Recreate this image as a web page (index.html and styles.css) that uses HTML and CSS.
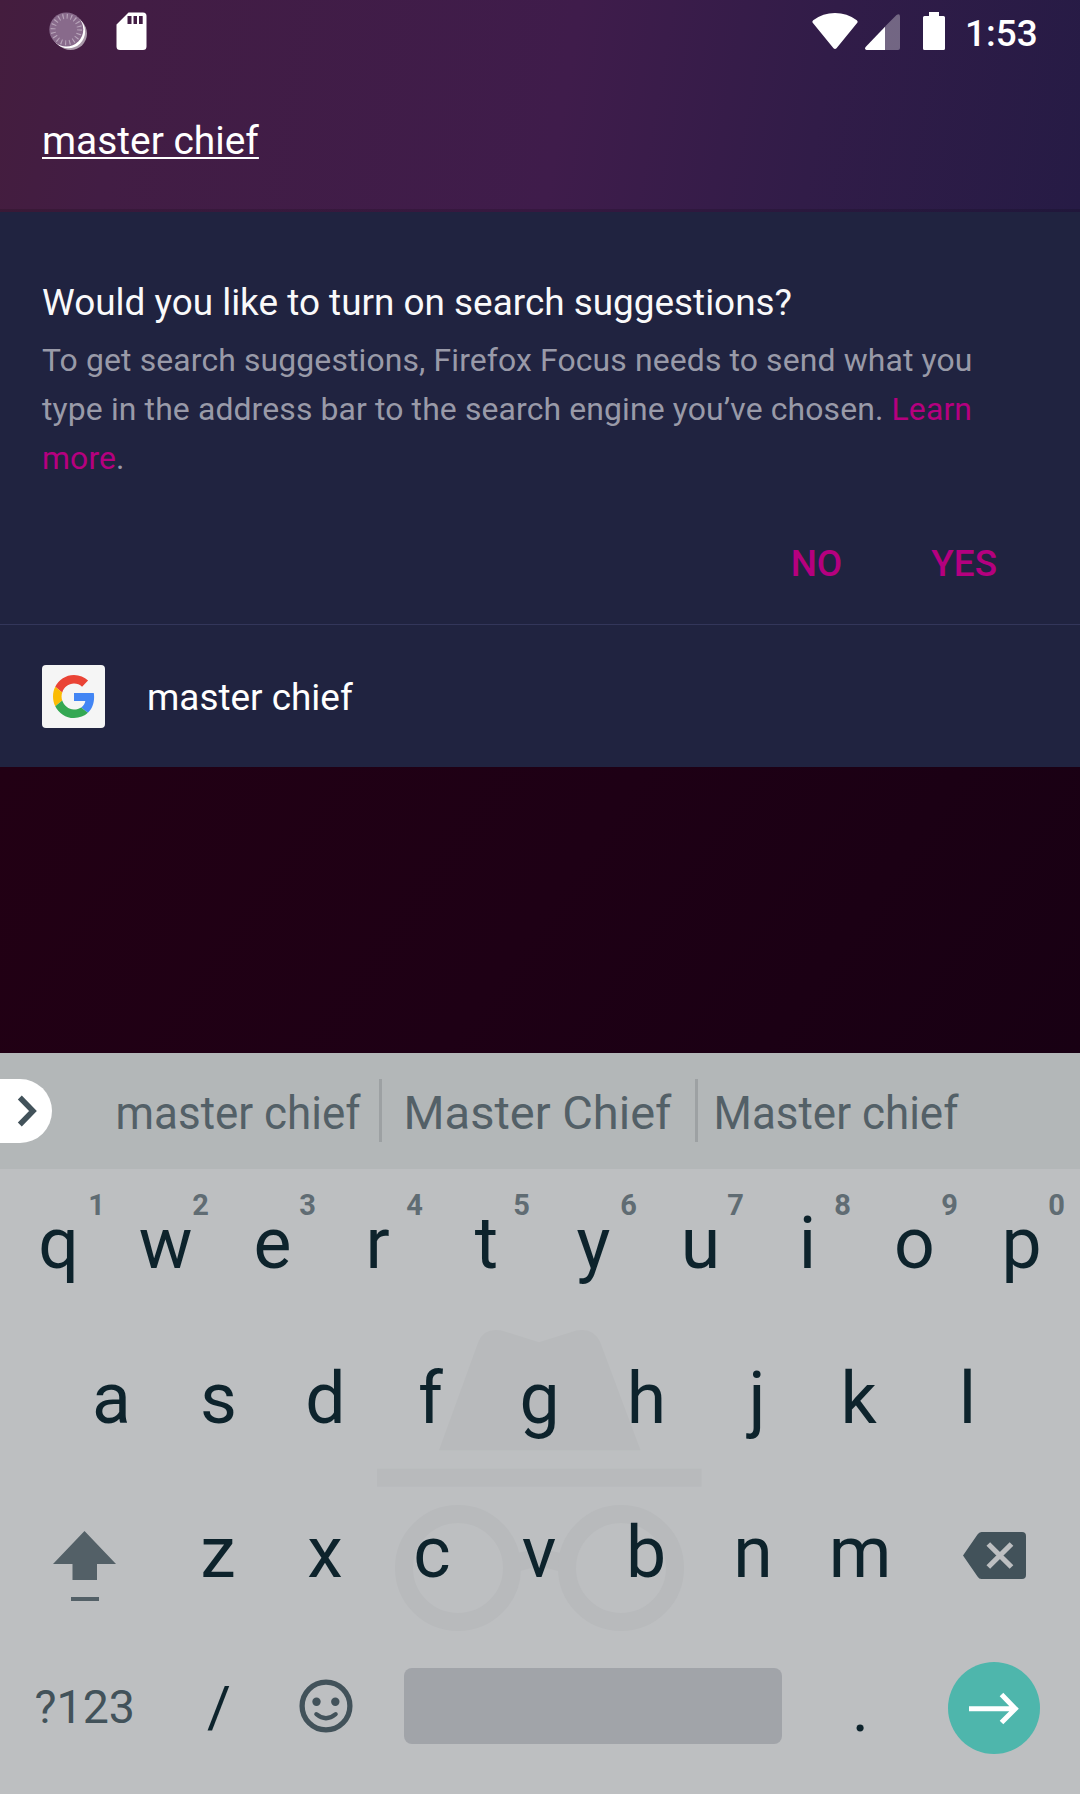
FILE: index.html
```html
<!DOCTYPE html>
<html lang="en">
<head>
<meta charset="utf-8">
<title>Search</title>
<link rel="stylesheet" href="styles.css">
</head>
<body>
<div class="screen">
  <header class="header">
    <div class="status-bar">
      <svg class="icon-sync" width="38" height="40" viewBox="0 0 38 40">
        <circle cx="21.5" cy="21.5" r="16.5" fill="#fff" fill-opacity=".55"/>
        <circle cx="19.3" cy="19.5" r="16.8" fill="#fff"/>
        <circle cx="17.3" cy="17.5" r="17" fill="#886a8b"/>
        <circle cx="17.3" cy="17.5" r="13.2" fill="none" stroke="#b8a5ba" stroke-width="5" stroke-dasharray="1.1 3.0469"/>
      </svg>
      <svg class="icon-sd" width="31" height="38" viewBox="0 0 31 38">
        <path fill="#fff" fill-rule="evenodd" d="M12.5.5H27Q30.500.5 30.500 4V34.500Q30.500 38 27 38H4Q.5 38 .5 34.500V12.500ZM11.500 4V12H15.500V4ZM17.500 4V12H21V4ZM23 4V12H26.700V4Z"/>
      </svg>
      <span class="spacer"></span>
      <svg class="icon-wifi" width="46" height="37" viewBox="0 0 46 37">
        <path fill="#fff" d="M.5 9.500Q0 8 1.200 7.200Q11 0 23 0T44.800 7.200Q46 8 45.500 9.500L24.500 35.300Q23 36.800 21.500 35.300Z"/>
      </svg>
      <svg class="icon-signal" width="35" height="36" viewBox="0 0 35 36">
        <path fill="#fff" fill-opacity=".33" d="M20 12.500 31.500 1Q35-.8 35 2.500V34Q35 36 33 36H20Z"/>
        <path fill="#fff" d="M20 12.800V36H1.500Q-.8 35.500.6 33Z"/>
      </svg>
      <svg class="icon-battery" width="22" height="38" viewBox="0 0 22 38">
        <path fill="#fff" d="M6 0H16V4H20.500Q22 4 22 5.500V36.500Q22 38 20.500 38H1.500Q0 38 0 36.500V5.500Q0 4 1.500 4H6Z"/>
      </svg>
      <span class="clock">1:53</span>
    </div>
    <div class="url-bar"><span class="url-text">master chief</span></div>
  </header>

  <main class="panel">
    <section class="prompt">
      <h1 class="prompt-title">Would you like to turn on search suggestions?</h1>
      <p class="prompt-body">To get search suggestions, Firefox Focus needs to send what you type in the address bar to the search engine you’ve chosen. <a class="link">Learn more</a>.</p>
      <div class="prompt-actions">
        <span class="action">NO</span>
        <span class="action">YES</span>
      </div>
    </section>
    <section class="result">
      <div class="engine">
        <svg width="42" height="43" viewBox="0 0 48 48" preserveAspectRatio="none">
          <path fill="#EA4335" d="M24 9.500c3.540 0 6.710 1.220 9.210 3.600l6.850-6.850C35.900 2.380 30.470 0 24 0 14.620 0 6.510 5.380 2.560 13.220l7.980 6.190C12.430 13.720 17.740 9.500 24 9.500z"/>
          <path fill="#4285F4" d="M46.980 24.550c0-1.570-.15-3.090-.38-4.550H24v9.020h12.940c-.58 2.960-2.260 5.480-4.780 7.180l7.730 6c4.510-4.180 7.090-10.360 7.090-17.650z"/>
          <path fill="#FBBC05" d="M10.530 28.590c-.48-1.450-.76-2.990-.76-4.590s.27-3.140.76-4.590l-7.980-6.190C.92 16.460 0 20.120 0 24c0 3.880.92 7.540 2.560 10.780l7.970-6.190z"/>
          <path fill="#34A853" d="M24 48c6.480 0 11.930-2.130 15.890-5.810l-7.730-6c-2.150 1.450-4.920 2.300-8.160 2.300-6.260 0-11.570-4.220-13.470-9.910l-7.980 6.190C6.510 42.620 14.620 48 24 48z"/>
        </svg>
      </div>
      <span class="result-text">master chief</span>
    </section>
  </main>

  <div class="backdrop"></div>

  <section class="keyboard">
    <div class="strip">
      <div class="expand">
        <svg width="54" height="64" viewBox="0 0 54 64">
          <path d="M19.800 18.500 33 32 19.800 45.500" fill="none" stroke="#42525a" stroke-width="5.500"/>
        </svg>
      </div>
      <div class="candidate first"><span class="narrow">master chief</span></div>
      <div class="divider"></div>
      <div class="candidate second"><span>Master Chief</span></div>
      <div class="divider"></div>
      <div class="candidate third"><span class="narrow">Master chief</span></div>
    </div>
    <div class="keys">
      <svg class="incognito" width="325" height="304" viewBox="0 0 325 304">
        <g fill="#b8babc">
          <path d="M62 122.300 101.500 13.500Q107.500-.8 124.500 2.500L162 14.300 199.500 2.500Q216-.8 223 13.700L263.500 122.300Z"/>
          <path d="M0 140.700H324.500V158.700H0Z"/>
          <path d="M140 225Q162 219 184 225L181 243Q162 236.500 143 243Z"/>
        </g>
        <g fill="none" stroke="#b8babc" stroke-width="18">
          <circle cx="81" cy="240" r="54"/>
          <circle cx="244" cy="240" r="54"/>
        </g>
      </svg>
      <div class="row top">
        <div class="key">q<span class="hint one">1</span></div>
        <div class="key">w<span class="hint">2</span></div>
        <div class="key">e<span class="hint">3</span></div>
        <div class="key lean-left">r<span class="hint">4</span></div>
        <div class="key">t<span class="hint">5</span></div>
        <div class="key">y<span class="hint">6</span></div>
        <div class="key">u<span class="hint">7</span></div>
        <div class="key">i<span class="hint">8</span></div>
        <div class="key">o<span class="hint">9</span></div>
        <div class="key">p<span class="hint">0</span></div>
      </div>
      <div class="row home">
        <div class="key">a</div><div class="key">s</div><div class="key">d</div>
        <div class="key lean-left">f</div><div class="key">g</div><div class="key">h</div>
        <div class="key lean-right">j</div><div class="key lean-left">k</div><div class="key">l</div>
      </div>
      <div class="row">
        <div class="key wide">
          <svg class="icon-shift" width="64" height="72" viewBox="0 0 64 72">
            <path fill="#536067" d="M31.500 1 63 34H44V50H19.500V34H0ZM18 67H46V71H18Z"/>
          </svg>
        </div>
        <div class="key">z</div><div class="key">x</div><div class="key">c</div>
        <div class="key">v</div><div class="key">b</div><div class="key">n</div>
        <div class="key">m</div>
        <div class="key wide">
          <svg class="icon-delete" width="63" height="47" viewBox="0 0 63 47">
            <path fill="#42525a" d="M18.500 0H59Q63 0 63 4V43Q63 47 59 47H18.500Q16 47 14.500 44.500L0 23.500 14.500 2.500Q16 0 18.500 0Z"/>
            <path d="M25.300 12 48.500 35M48.500 12 25.300 35" stroke="#bdbfc1" stroke-width="5.200"/>
          </svg>
        </div>
      </div>
      <div class="row">
        <div class="key wide symbols">?123</div>
        <div class="key slash">/</div>
        <div class="key">
          <svg class="icon-emoji" width="54" height="54" viewBox="0 0 54 54">
            <g fill="none" stroke="#42525a">
              <circle cx="27" cy="27" r="23.900" stroke-width="5.300"/>
              <path d="M17.300 35.200Q27 43.300 36.700 35.200" stroke-width="4.200" stroke-linecap="round"/>
            </g>
            <circle cx="17.500" cy="22.700" r="4.200" fill="#42525a"/>
            <circle cx="36.300" cy="22.700" r="4.200" fill="#42525a"/>
          </svg>
        </div>
        <div class="key space"><div class="space-bar"></div></div>
        <div class="key period">.</div>
        <div class="key wide">
          <div class="enter">
            <svg width="92" height="92" viewBox="0 0 92 92">
              <path d="M21 46.700H67M53.500 32.500 67.300 46.700 53.500 60.500" fill="none" stroke="#fff" stroke-width="5"/>
            </svg>
          </div>
        </div>
      </div>
    </div>
  </section>
</div>
</body>
</html>
```
FILE: styles.css
```css
* { box-sizing: border-box; }

body {
  margin: 0;
  font-family: Roboto, sans-serif;
  font-size: 36.9px;
  line-height: 1.172;
}

.screen {
  width: 1080px;
  height: 1794px;
  display: flex;
  flex-direction: column;
  overflow: hidden;
  background: #1c0013;
}

.header {
  height: 212px;
  background:
    linear-gradient(rgba(0, 0, 0, .15), rgba(0, 0, 0, .15)) 0 209px / 100% 3px no-repeat,
    linear-gradient(100deg, #441d3e 0%, #421d44 12%, #3f1c4b 52%, #311c48 75%, #261b45 100%);
}

.status-bar {
  height: 63px;
  display: flex;
  align-items: flex-start;
  padding: 12px 42px 0 49px;
  color: #fff;
}

.icon-sd { margin-left: 29px; }
.spacer { flex: 1; }
.icon-wifi { margin: 1px 7px 0 0; }
.icon-signal { margin: 2px 23px 0 0; }
.icon-battery { margin-right: 20px; }

.clock {
  font-weight: 500;
  width: 73px;
  white-space: nowrap;
}

.url-bar {
  height: 149px;
  display: flex;
  align-items: center;
  padding: 6px 42px 0;
  color: #fff;
  font-size: 38.9px;
}

.url-text {
  text-decoration: underline;
  text-decoration-thickness: 2px;
  text-underline-offset: 3px;
  text-decoration-skip-ink: none;
}

.panel {
  height: 555px;
  background: #202340;
}

.prompt {
  height: 413px;
  padding: 69px 42px 0;
  border-bottom: 1px solid #33365a;
}

.prompt-title {
  margin: 0;
  font-size: 36.9px;
  font-weight: 400;
  color: #f9f9fa;
}

.prompt-body {
  margin: 12px 0 0;
  padding-right: 42px;
  font-size: 31.9px;
  line-height: 49px;
  letter-spacing: .13px;
  color: #999aa8;
}

.link { color: #b5007f; }

.prompt-actions {
  display: flex;
  justify-content: flex-end;
  gap: 89px;
  margin-top: 59px;
  padding-right: 41px;
  color: #b5007f;
  font-weight: 500;
}

.result {
  height: 142px;
  display: flex;
  align-items: center;
  gap: 42px;
  padding: 0 42px;
  color: #fff;
}

.result-text { padding-top: 3px; }

.engine {
  width: 63px;
  height: 63px;
  display: flex;
  align-items: center;
  justify-content: center;
  border-radius: 4px;
  background: #f5f5f5;
}

.backdrop {
  height: 286px;
  background: linear-gradient(125deg, #220014 0%, #1e0015 50%, #180013 100%);
}

.keyboard {
  height: 741px;
  background: #bdbfc1;
}

.strip {
  height: 116px;
  display: flex;
  align-items: center;
  background: #b3b7b8;
  color: #536067;
  font-size: 47px;
}

.expand {
  width: 52px;
  height: 64px;
  border-radius: 0 32px 32px 0;
  background: #fff;
}

.candidate {
  display: flex;
  justify-content: center;
  padding-top: 3px;
  white-space: nowrap;
}

.candidate.first { width: 327px; padding-left: 45px; }
.candidate.second { width: 313px; padding-right: 2px; }
.candidate.third { width: 313px; padding-right: 38px; }
.narrow { transform: scaleX(.935); }

.divider {
  width: 3px;
  height: 63px;
  margin-bottom: 1px;
  background: #9da1a3;
}

.keys {
  position: relative;
  height: 625px;
  padding: 0 6px 0 4px;
}

.incognito {
  position: absolute;
  left: 377px;
  top: 159px;
}

.row {
  position: relative;
  height: 154.5px;
  display: flex;
  justify-content: center;
}

.row.top { margin: 0 -1px 0 1px; }
.row.home { padding-left: 1px; }

.key {
  position: relative;
  width: 107px;
  display: flex;
  align-items: center;
  justify-content: center;
  padding-bottom: 4px;
  color: #0d232c;
  font-size: 71.500px;
}

.key.wide { width: 160.5px; }
.key.lean-left { padding-right: 4px; }
.key.lean-right { padding-left: 7px; }

.hint {
  position: absolute;
  right: 10px;
  top: 19px;
  font-size: 29px;
  font-weight: 700;
  color: #606c73;
}

.hint.one { right: 7px; }

.icon-shift { margin: 25px 0 0 2px; }
.icon-delete { margin: 4px 0 0 2px; }
.icon-emoji { margin: 0 0 4px 1px; }

.key.symbols {
  padding-left: 1px;
  padding-bottom: 6px;
  font-size: 46.500px;
  color: #42525a;
}

.key.slash { font-size: 58px; padding-left: 2px; padding-bottom: 3px; }
.key.period { font-size: 64px; padding-left: 1px; padding-bottom: 0; }
.key.space { width: 428px; }

.space-bar {
  width: 378px;
  height: 76px;
  margin-bottom: 3px;
  border-radius: 8px;
  background: #a1a4a9;
}

.enter {
  width: 92px;
  height: 92px;
  margin-top: 1px;
  border-radius: 50%;
  background: #4eb6ac;
}

.enter svg { display: block; }
```
